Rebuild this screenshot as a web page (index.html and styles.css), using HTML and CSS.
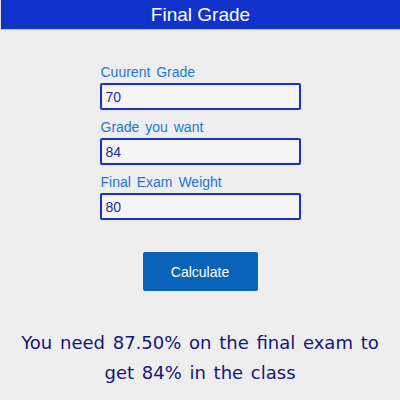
FILE: index.html
```html
<!DOCTYPE html>
<html>
<head>
<meta charset="utf-8">
<link rel="stylesheet" href="styles.css">
</head>
<body>
<header class="bar">Final Grade</header>
<main class="form">
  <label class="field">
    <span class="label">Cuurent Grade</span>
    <input class="input" type="text" value="70">
  </label>
  <label class="field">
    <span class="label">Grade you want</span>
    <input class="input" type="text" value="84">
  </label>
  <label class="field">
    <span class="label">Final Exam Weight</span>
    <input class="input" type="text" value="80">
  </label>
  <button class="btn">Calculate</button>
</main>
<p class="result">You need 87.50% on the final exam to get 84% in the class</p>
</body>
</html>
```
FILE: styles.css
```css
html, body { margin: 0; padding: 0; }
body {
  background: #eeeeee;
  font-family: "Liberation Sans", Arial, sans-serif;
  width: 400px;
  height: 400px;
  overflow: hidden;
}
.bar {
  background: #1133cc;
  color: #ffffff;
  height: 29px;
  line-height: 29px;
  font-size: 19px;
  text-align: center;
  border-bottom: 1px solid #c8c8c8;
  border-left: 1px solid #dddddd;
}
.form {
  display: flex;
  flex-direction: column;
  align-items: center;
  padding-top: 34px;
}
.field {
  display: flex;
  flex-direction: column;
  width: 201px;
  margin-bottom: 9px;
}
.label {
  color: #2277d6;
  font-size: 14px;
  word-spacing: 2px;
  line-height: 17px;
  padding-left: 1px;
  margin-bottom: 2px;
}
.input {
  box-sizing: border-box;
  height: 27px;
  width: 201px;
  border: 2px solid #1a2ecc;
  border-radius: 2px;
  background: #f5f5f5;
  color: #1a2a99;
  font-family: "Liberation Sans", Arial, sans-serif;
  font-size: 14px;
  padding: 0 4px;
  margin: 0;
  outline: none;
}
.btn {
  margin-top: 23px;
  width: 115px;
  height: 39px;
  background: #0a63b8;
  color: #ffffff;
  border: none;
  border-radius: 2px;
  font-family: "Liberation Sans", Arial, sans-serif;
  font-size: 14px;
  cursor: pointer;
}
.result {
  margin: 37px 18px 0;
  text-align: center;
  color: #15157a;
  font-family: "DejaVu Sans", Verdana, sans-serif;
  font-size: 18px;
  line-height: 30px;
  word-spacing: 2px;
}
```
